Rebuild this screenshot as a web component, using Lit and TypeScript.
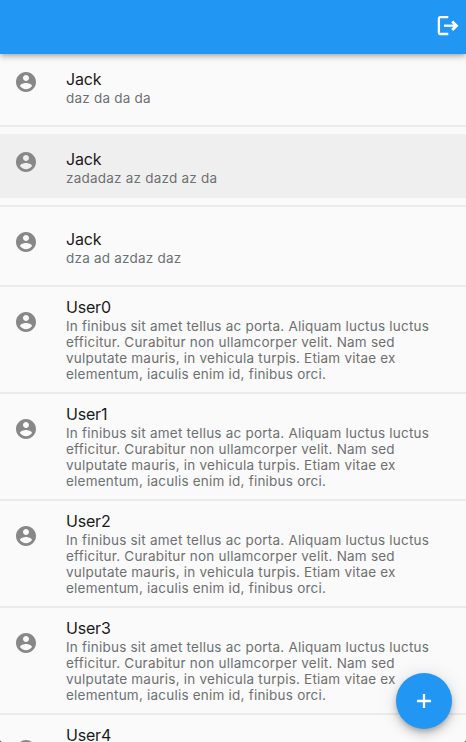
import { LitElement, html, css } from "lit";
import { customElement, property } from "lit/decorators.js";

interface Message {
  name: string;
  text: string;
  selected?: boolean;
  long?: boolean;
}

const LOREM =
  "In finibus sit amet tellus ac porta. Aliquam luctus luctus efficitur. Curabitur non ullamcorper velit. Nam sed vulputate mauris, in vehicula turpis. Etiam vitae ex elementum, iaculis enim id, finibus orci.";

const MESSAGES: Message[] = [
  { name: "Jack", text: "daz da da da" },
  { name: "Jack", text: "zadadaz az dazd az da", selected: true },
  { name: "Jack", text: "dza ad azdaz daz" },
  ...[0, 1, 2, 3, 4].map((n) => ({ name: `User${n}`, text: LOREM, long: true })),
];

@customElement("message-tile")
export class MessageTile extends LitElement {
  @property({ attribute: false }) message!: Message;

  static styles = css`
    :host {
      display: block;
      flex: none;
      padding: 7px 0;
      border-bottom: 2px solid #ebebeb;
    }
    .tile {
      display: flex;
      height: 64px;
      padding: 0 16px 0 14px;
    }
    .tile.selected {
      background: #efefef;
    }
    .tile.long {
      height: 91px;
    }
    .avatar {
      flex: none;
      width: 24px;
      height: 24px;
      margin: 16px 28px 0 0;
      fill: #888;
    }
    .body {
      flex: 1;
      padding-top: 15px;
    }
    .long .body {
      padding-top: 3px;
    }
    .name {
      font-size: 16px;
      line-height: 20px;
      letter-spacing: -0.2px;
      color: #1a1a1a;
    }
    .text {
      margin-top: 1px;
      font-size: 13.5px;
      line-height: 16px;
      letter-spacing: 0.22px;
      color: #707070;
    }
  `;

  render() {
    const m = this.message;
    return html`
      <div class="tile ${m.selected ? "selected" : ""} ${m.long ? "long" : ""}">
        <svg class="avatar" viewBox="0 0 24 24">
          <path
            d="M12 2C6.48 2 2 6.48 2 12s4.48 10 10 10 10-4.48 10-10S17.52 2 12 2zm0 3c1.66 0 3 1.34 3 3s-1.34 3-3 3-3-1.34-3-3 1.34-3 3-3zm0 14.2c-2.5 0-4.71-1.28-6-3.22.03-1.99 4-3.08 6-3.08 1.99 0 5.97 1.09 6 3.08-1.29 1.94-3.5 3.22-6 3.22z"
          />
        </svg>
        <div class="body">
          <div class="name">${m.name}</div>
          <div class="text">${m.text}</div>
        </div>
      </div>
    `;
  }
}

@customElement("app-root")
export class AppRoot extends LitElement {
  static styles = css`
    :host {
      display: block;
      height: 100vh;
      background: #222;
      font-family: Inter, Roboto, sans-serif;
    }
    .window {
      display: flex;
      flex-direction: column;
      position: relative;
      height: 100%;
      overflow: hidden;
      border-radius: 0 0 2px 2px;
      background: #fafafa;
    }
    .bar {
      display: flex;
      flex: none;
      align-items: center;
      justify-content: flex-end;
      height: 54px;
      box-sizing: border-box;
      padding: 0 6px 2px 0;
      background: #2196f3;
      box-shadow: 0 2px 4px -1px rgba(0, 0, 0, 0.2), 0 4px 5px rgba(0, 0, 0, 0.1),
        0 1px 10px rgba(0, 0, 0, 0.1);
      z-index: 1;
    }
    .logout {
      width: 24px;
      height: 24px;
      fill: none;
      stroke: #fff;
      stroke-width: 2.3;
    }
    .list {
      display: flex;
      flex-direction: column;
      flex: 1;
      min-height: 0;
      overflow: hidden;
    }
    .list message-tile:first-child {
      padding-top: 0;
    }
    .fab {
      position: absolute;
      right: 14px;
      bottom: 13px;
      display: grid;
      place-items: center;
      width: 56px;
      height: 56px;
      padding: 0;
      border: 0;
      border-radius: 50%;
      background: #2196f3;
      box-shadow: 0 3px 5px -1px rgba(0, 0, 0, 0.2), 0 6px 10px rgba(0, 0, 0, 0.14),
        0 1px 18px rgba(0, 0, 0, 0.12);
      z-index: 1;
    }
    .plus {
      width: 24px;
      height: 24px;
      fill: none;
      stroke: #fff;
      stroke-width: 2.3;
    }
  `;

  render() {
    return html`
      <div class="window">
        <header class="bar">
          <svg class="logout" viewBox="0 0 24 24">
            <path d="M12.3 3.2H4.3a1.4 1.4 0 0 0-1.4 1.4v14a1.4 1.4 0 0 0 1.4 1.4h8" />
            <path d="M8 11.7h12.5" />
            <path d="M16.2 7.4l4.300 4.300-4.300 4.300" stroke-width="2.8" />
          </svg>
        </header>
        <main class="list">
          ${MESSAGES.map((m) => html`<message-tile .message=${m}></message-tile>`)}
        </main>
        <button class="fab" aria-label="Add">
          <svg class="plus" viewBox="0 0 24 24">
            <path d="M5 12h14M12 5v14" />
          </svg>
        </button>
      </div>
    `;
  }
}
